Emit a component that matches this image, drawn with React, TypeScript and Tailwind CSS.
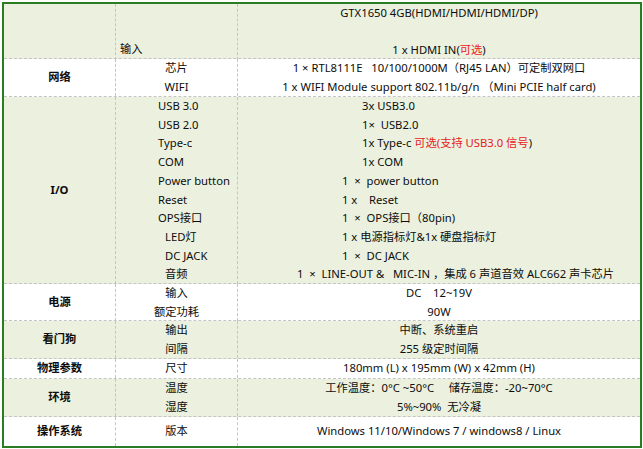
const font = { fontFamily: '"Noto Sans", "Noto Sans CJK SC", sans-serif' };

type Line = { text: React.ReactNode; pl?: string };

type Row = {
  label: string;
  h: string;
  bg: string;
  names: Line[];
  values: Line[];
  align?: "left" | "center";
  last?: boolean;
};

const Red = ({ children }: { children: React.ReactNode }) => (
  <span className="text-[#e8201c]">{children}</span>
);

const rows: Row[] = [
  {
    label: "网络",
    h: "h-[38px]",
    bg: "bg-white",
    names: [{ text: "芯片" }, { text: "WIFI" }],
    values: [
      { text: "1 × RTL8111E   10/100/1000M（RJ45 LAN）可定制双网口" },
      { text: "1 x WIFI Module support 802.11b/g/n （Mini PCIE half card)" },
    ],
  },
  {
    label: "I/O",
    h: "h-[187px]",
    bg: "bg-[#ebf1de]",
    align: "left",
    names: [
      { text: "USB 3.0", pl: "pl-[42px]" },
      { text: "USB 2.0", pl: "pl-[42px]" },
      { text: "Type-c", pl: "pl-[42px]" },
      { text: "COM", pl: "pl-[42px]" },
      { text: "Power button", pl: "pl-[42px]" },
      { text: "Reset", pl: "pl-[42px]" },
      { text: "OPS接口", pl: "pl-[42px]" },
      { text: "LED灯", pl: "pl-[49px]" },
      { text: "DC JACK", pl: "pl-[49px]" },
      { text: "音频", pl: "pl-[49px]" },
    ],
    values: [
      { text: "3x USB3.0", pl: "pl-[124px]" },
      { text: "1×  USB2.0", pl: "pl-[124px]" },
      {
        text: (
          <>
            1x Type-c <Red>可选(支持 USB3.0 信号</Red>)
          </>
        ),
        pl: "pl-[124px]",
      },
      { text: "1x COM", pl: "pl-[124px]" },
      { text: "1  ×  power button", pl: "pl-[104px]" },
      { text: "1 x    Reset", pl: "pl-[104px]" },
      { text: "1  ×  OPS接口（80pin)", pl: "pl-[104px]" },
      { text: "1 x 电源指标灯&1x 硬盘指标灯", pl: "pl-[104px]" },
      { text: "1  ×  DC JACK", pl: "pl-[104px]" },
      { text: "1  ×  LINE-OUT &   MIC-IN ，集成 6 声道音效 ALC662 声卡芯片", pl: "pl-[59px]" },
    ],
  },
  {
    label: "电源",
    h: "h-[37px]",
    bg: "bg-white",
    names: [{ text: "输入" }, { text: "额定功耗" }],
    values: [{ text: "DC    12~19V" }, { text: "90W" }],
  },
  {
    label: "看门狗",
    h: "h-[38px]",
    bg: "bg-[#ebf1de]",
    names: [{ text: "输出" }, { text: "间隔" }],
    values: [{ text: "中断、系统重启" }, { text: "255 级定时间隔" }],
  },
  {
    label: "物理参数",
    h: "h-[20px]",
    bg: "bg-white",
    names: [{ text: "尺寸" }],
    values: [{ text: "180mm (L) x 195mm (W) x 42mm (H)" }],
  },
  {
    label: "环境",
    h: "h-[38px]",
    bg: "bg-[#ebf1de]",
    names: [{ text: "温度" }, { text: "湿度" }],
    values: [
      { text: "工作温度：0°C ~50°C     储存温度：-20~70°C" },
      { text: "5%~90%  无冷凝" },
    ],
  },
  {
    label: "操作系统",
    h: "h-[29px]",
    bg: "bg-white",
    last: true,
    names: [{ text: "版本" }],
    values: [{ text: "Windows 11/10/Windows 7 / windows8 / Linux" }],
  },
];

function Cell({ lines, align, border }: { lines: Line[]; align?: string; border?: boolean }) {
  return (
    <div
      className={`flex flex-col justify-center ${border ? "border-r border-dashed border-[#c4c4c4]" : ""} ${
        align === "left" ? "items-start" : "items-center"
      }`}
    >
      {lines.map((l, i) => (
        <div key={i} className={`whitespace-pre leading-[18.7px] ${l.pl ?? ""}`}>
          {l.text}
        </div>
      ))}
    </div>
  );
}

export default function App() {
  return (
    <div className="w-[643px] h-[449px] bg-white pt-[2px] pl-[2px] text-[11.25px] text-[#0d0d0d]" style={font}>
      <div className="w-[640px] h-[446px] border-2 border-[#2b7d24] flex flex-col">
        {/* display row, cut at the top */}
        <div className="h-[55px] grid grid-cols-[112px_122px_1fr] bg-[#ebf1de] border-b border-dashed border-[#c4c4c4]">
          <div className="border-r border-dashed border-[#c4c4c4]" />
          <div className="border-r border-dashed border-[#c4c4c4] flex flex-col justify-end pl-[4px] pb-[1px] leading-[18.7px]">
            输入
          </div>
          <div className="flex flex-col items-center leading-[18.7px]">
            <div>GTX1650 4GB(HDMI/HDMI/HDMI/DP)</div>
            <div>&nbsp;</div>
            <div>
              1 x HDMI IN(<Red>可选</Red>)
            </div>
          </div>
        </div>

        {rows.map((r) => (
          <div
            key={r.label}
            className={`${r.h} ${r.bg} grid grid-cols-[112px_122px_1fr] ${
              r.last ? "" : "border-b border-dashed border-[#c4c4c4]"
            }`}
          >
            <div className="flex items-center justify-center font-bold border-r border-dashed border-[#c4c4c4]">
              {r.label}
            </div>
            <Cell lines={r.names} align={r.align} border />
            <Cell lines={r.values} align={r.align} />
          </div>
        ))}
      </div>
    </div>
  );
}
